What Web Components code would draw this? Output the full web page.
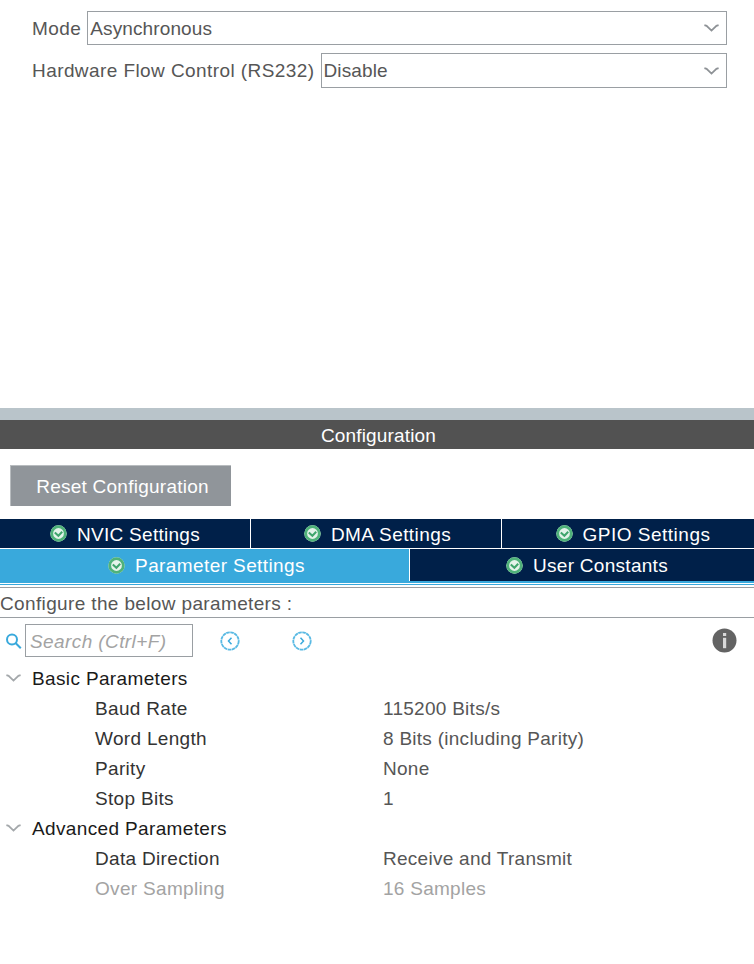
<!DOCTYPE html>
<html lang="en">
<head>
<meta charset="utf-8">
<title>Configuration</title>
<style>
html, body { margin: 0; padding: 0; background: #fff; }
body { width: 754px; height: 964px; overflow: hidden; font: 19px/22px "Liberation Sans", Arial, sans-serif; color: #565656; }
</style>
</head>
<body>
<mode-panel>
    <select-row label="Mode" value="Asynchronous" style="--nudge: 2px"></select-row>
    <select-row label="Hardware Flow Control (RS232)" value="Disable" style="--row-top: 8px; --box-height: 35px"></select-row>
</mode-panel>
<config-panel></config-panel>

<script>
const CHECK_ICON = `<svg width="17" height="17" viewBox="0 0 17 17" aria-hidden="true">
    <circle cx="8.5" cy="8.5" r="8.2" fill="#e4f3ea"/>
    <circle cx="8.5" cy="8.5" r="6.8" fill="none" stroke="#4fb27a" stroke-width="2.8"/>
    <path d="M4.8 7.4l3.6 3.4 3.8-4" fill="none" stroke="#3fa56c" stroke-width="2"/>
</svg>`;

const CHEVRON = (stroke, w, h) => `<svg width="${w}" height="${h}" viewBox="0 0 15 8" aria-hidden="true">
    <path d="M.4 1.2L2.6 1.8 7.5 6.6 12.4 1.8 14.6 1.2" fill="none" stroke="${stroke}" stroke-width="1.8"/>
</svg>`;


class ModePanel extends HTMLElement {
    constructor() {
        super();
        this.attachShadow({ mode: 'open' }).innerHTML = `
            <style>
            :host { display: block; height: 408px; box-sizing: border-box; padding: 11px 27px 0 32px; }
            </style>
            <slot></slot>`;
    }
}

class SelectRow extends HTMLElement {
    constructor() {
        super();
        this.attachShadow({ mode: 'open' }).innerHTML = `
            <style>
            :host { display: flex; align-items: center; margin-top: var(--row-top, 0); }
            label { white-space: nowrap; margin-right: 6px; letter-spacing: .42px; padding-top: var(--nudge, 0); }
            .box {
                flex: 1; height: var(--box-height, 34px); box-sizing: border-box; border: 1px solid #9a9fa3;
                display: flex; align-items: center; justify-content: space-between;
                padding: 0 7px 0 2px; background: #fff; letter-spacing: .12px;
            }
            #value { padding-top: var(--nudge, 0); }
            svg { display: block; }
            </style>
            <label id="label"></label>
            <div class="box"><span id="value"></span>${CHEVRON('#8e9296', 15, 8)}</div>`;
    }
    connectedCallback() {
        this.shadowRoot.querySelector('#label').textContent = this.getAttribute('label');
        this.shadowRoot.querySelector('#value').textContent = this.getAttribute('value');
    }
}

class TabItem extends HTMLElement {
    constructor() {
        super();
        this.attachShadow({ mode: 'open' }).innerHTML = `
            <style>
            :host {
                display: flex; align-items: center; justify-content: center; gap: 10px;
                background: #002049; color: #fff; white-space: nowrap; letter-spacing: var(--track, .28px);
                padding-left: var(--shift, 0); box-sizing: border-box;
            }
            :host([active]) { background: #39a9dc; }
            svg { display: block; }
            span { padding-top: 2px; }
            </style>
            ${CHECK_ICON}<span><slot></slot></span>`;
    }
}

class TabBar extends HTMLElement {
    constructor() {
        super();
        this.attachShadow({ mode: 'open' }).innerHTML = `
            <style>
            :host { display: block; background: #fff; }
            .top { display: grid; grid-template-columns: 250px 250px 1fr; column-gap: 1px; height: 29px; }
            .bottom { display: grid; grid-template-columns: 409px 1fr; column-gap: 1px; height: 32px; margin-top: 1px; }
            .rule { height: 2px; background: #39a9dc; }
            .rule2 { height: 1px; background: #39a9dc; margin-top: 1px; }
            .rule3 { height: 1px; background: #9a9fa3; margin-top: 2px; }
            </style>
            <div class="top">
                <tab-item>NVIC Settings</tab-item>
                <tab-item style="--track: .42px; --shift: 3px">DMA Settings</tab-item>
                <tab-item style="--track: .5px; --shift: 10px">GPIO Settings</tab-item>
            </div>
            <div class="bottom">
                <tab-item active style="--track: .4px; --shift: 4px">Parameter Settings</tab-item>
                <tab-item style="--shift: 10px">User Constants</tab-item>
            </div>
            <div class="rule"></div>
            <div class="rule2"></div>
            <div class="rule3"></div>`;
    }
}

class SearchBar extends HTMLElement {
    constructor() {
        super();
        this.attachShadow({ mode: 'open' }).innerHTML = `
            <style>
            :host { display: flex; align-items: center; height: 33px; padding-left: 5px; margin-top: 6px; }
            .search { display: block; margin-right: 3px; }
            .input {
                width: 168px; height: 33px; box-sizing: border-box; border: 1px solid #9a9fa3;
                padding-left: 4px; line-height: 33px; font-style: italic; color: #a3a3a3; letter-spacing: .4px;
            }
            .nav { display: block; margin-left: 27px; }
            .nav + .nav { margin-left: 52px; }
            .info { display: block; margin-left: auto; margin-right: 17px; }
            </style>
            <svg class="search" width="17" height="18" viewBox="0 0 17 18" aria-hidden="true">
                <circle cx="7" cy="7.5" r="5" fill="none" stroke="#39a9dc" stroke-width="2"/>
                <path d="M10.8 11.2l5 5" fill="none" stroke="#39a9dc" stroke-width="2"/>
            </svg>
            <div class="input">Search (Ctrl+F)</div>
            <svg class="nav" width="20" height="20" viewBox="0 0 20 20" aria-hidden="true">
                <circle cx="10" cy="10" r="8.7" fill="none" stroke="#58b9e3" stroke-width="1.8" stroke-dasharray="3.6 .5"/>
                <path d="M11.5 6.8L8.5 10l3 3.2" fill="none" stroke="#39a9dc" stroke-width="1.5"/>
            </svg>
            <svg class="nav" width="20" height="20" viewBox="0 0 20 20" aria-hidden="true">
                <circle cx="10" cy="10" r="8.7" fill="none" stroke="#58b9e3" stroke-width="1.8" stroke-dasharray="3.6 .5"/>
                <path d="M8.5 6.8l3 3.2-3 3.2" fill="none" stroke="#39a9dc" stroke-width="1.5"/>
            </svg>
            <svg class="info" width="25" height="25" viewBox="0 0 25 25" aria-hidden="true">
                <circle cx="12.5" cy="12.5" r="12" fill="#636363"/>
                <rect x="11" y="5" width="3.2" height="3" fill="#d8d8d8"/>
                <rect x="11" y="9.8" width="3.2" height="10.4" fill="#d8d8d8"/>
            </svg>`;
    }
}

class ParamGroup extends HTMLElement {
    constructor() {
        super();
        this.attachShadow({ mode: 'open' }).innerHTML = `
            <style>
            :host { display: block; }
            .head { display: flex; align-items: center; height: 30px; color: #1a1a1a; letter-spacing: .36px; }
            #title { padding-top: 2px; }
            svg { display: block; margin: 0 11px 0 6px; }
            </style>
            <div class="head">${CHEVRON('#a4a8ab', 15, 8)}<span id="title"></span></div>
            <slot></slot>`;
    }
    connectedCallback() {
        this.shadowRoot.querySelector('#title').textContent = this.getAttribute('title');
    }
}

class ParamRow extends HTMLElement {
    constructor() {
        super();
        this.attachShadow({ mode: 'open' }).innerHTML = `
            <style>
            :host {
                display: grid; grid-template-columns: 288px 1fr; height: 30px; box-sizing: border-box;
                align-items: center; padding: 2px 0 0 95px; color: #333; letter-spacing: .32px;
            }
            :host([disabled]) { color: #a3a3a3; }
            .value { color: #565656; letter-spacing: .27px; }
            :host([disabled]) .value { color: #a3a3a3; }
            </style>
            <span id="name"></span>
            <span class="value" id="value"></span>`;
    }
    connectedCallback() {
        this.shadowRoot.querySelector('#name').textContent = this.getAttribute('name');
        this.shadowRoot.querySelector('#value').textContent = this.getAttribute('value');
    }
}

class ConfigPanel extends HTMLElement {
    constructor() {
        super();
        this.attachShadow({ mode: 'open' }).innerHTML = `
            <style>
            :host { display: block; }
            .strip { height: 12px; background: #b9c4ca; }
            .title { height: 29px; line-height: 32px; background: #525252; color: #fff; text-align: center; letter-spacing: .16px; padding-left: 3px; box-sizing: border-box; }
            .reset {
                display: block; width: 221px; height: 41px; box-sizing: border-box; margin: 16px 0 13px 10px;
                border: 1px solid #b8bcbf; border-width: 1px 0 0 1px; background: #90959a; color: #fff;
                font: inherit; letter-spacing: .25px; padding: 2px 0 0 3px;
            }
            .hint { height: 30px; line-height: 32px; box-sizing: border-box; border-bottom: 1px solid #9a9fa3; letter-spacing: .36px; }
            .tree { margin-top: 6px; }
            </style>
            <div class="strip"></div>
            <div class="title">Configuration</div>
            <button class="reset" type="button">Reset Configuration</button>
            <tab-bar></tab-bar>
            <div class="hint">Configure the below parameters :</div>
            <search-bar></search-bar>
            <div class="tree">
                <param-group title="Basic Parameters">
                    <param-row name="Baud Rate" value="115200 Bits/s"></param-row>
                    <param-row name="Word Length" value="8 Bits (including Parity)"></param-row>
                    <param-row name="Parity" value="None"></param-row>
                    <param-row name="Stop Bits" value="1"></param-row>
                </param-group>
                <param-group title="Advanced Parameters">
                    <param-row name="Data Direction" value="Receive and Transmit"></param-row>
                    <param-row name="Over Sampling" value="16 Samples" disabled></param-row>
                </param-group>
            </div>`;
    }
}

customElements.define('mode-panel', ModePanel);
customElements.define('select-row', SelectRow);
customElements.define('tab-item', TabItem);
customElements.define('tab-bar', TabBar);
customElements.define('search-bar', SearchBar);
customElements.define('param-group', ParamGroup);
customElements.define('param-row', ParamRow);
customElements.define('config-panel', ConfigPanel);
</script>
</body>
</html>
